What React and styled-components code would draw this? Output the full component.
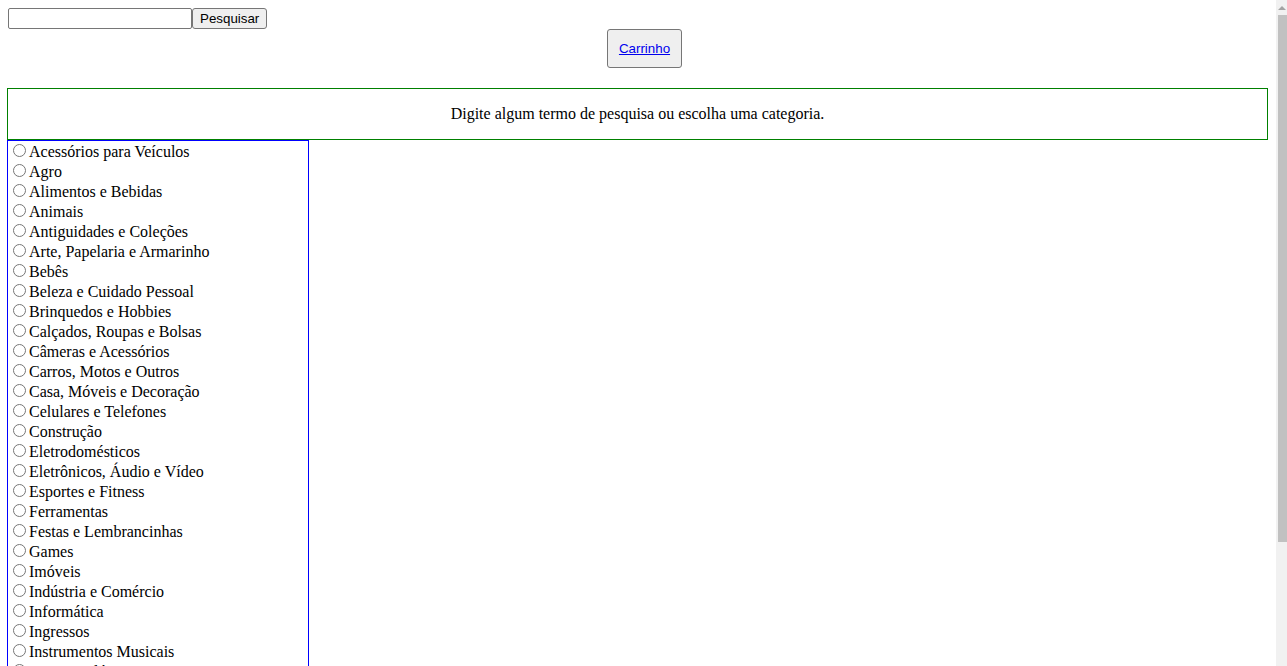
import React from 'react';
import styled, { createGlobalStyle } from 'styled-components';

const categories = [
  'Acessórios para Veículos',
  'Agro',
  'Alimentos e Bebidas',
  'Animais',
  'Antiguidades e Coleções',
  'Arte, Papelaria e Armarinho',
  'Bebês',
  'Beleza e Cuidado Pessoal',
  'Brinquedos e Hobbies',
  'Calçados, Roupas e Bolsas',
  'Câmeras e Acessórios',
  'Carros, Motos e Outros',
  'Casa, Móveis e Decoração',
  'Celulares e Telefones',
  'Construção',
  'Eletrodomésticos',
  'Eletrônicos, Áudio e Vídeo',
  'Esportes e Fitness',
  'Ferramentas',
  'Festas e Lembrancinhas',
  'Games',
  'Imóveis',
  'Indústria e Comércio',
  'Informática',
  'Ingressos',
  'Instrumentos Musicais',
  'Joias e Relógios',
  'Livros, Revistas e Comics',
  'Música, Filmes e Seriados',
  'Saúde',
  'Serviços',
  'Mais Categorias',
];

const App = () => {
  return (
    <>
      <GlobalStyle />
      <Header>
        <SearchForm onSubmit={(e) => e.preventDefault()}>
          <SearchInput type='text' />
          <SearchButton type='submit'>Pesquisar</SearchButton>
        </SearchForm>
        <CartButton>
          <a href='#carrinho'>Carrinho</a>
        </CartButton>
      </Header>
      <Message>
        <p>Digite algum termo de pesquisa ou escolha uma categoria.</p>
      </Message>
      <CategoryList>
        {categories.map((name) => (
          <Category key={name}>
            <input type='radio' name='category' value={name} />
            {name}
          </Category>
        ))}
      </CategoryList>
      <ScrollTrack>
        <ScrollArrow />
        <ScrollThumb />
      </ScrollTrack>
    </>
  );
};

export default App;

const GlobalStyle = createGlobalStyle`
  body {
    margin: 8px 19px 8px 7px;
    font-family: "Liberation Serif", "Times New Roman", serif;
    font-size: 16px;
    color: #000;
    background: #fff;
  }
`;

const Header = styled.header`
  display: flex;
  flex-direction: column;
  margin-bottom: 20px;
`;

const SearchForm = styled.form`
  display: flex;
  margin-left: 1px;
`;

const SearchInput = styled.input`
  width: 184px;
  height: 21px;
  box-sizing: border-box;
  padding: 1px 2px;
  border: 1px solid #767676;
  border-radius: 2px;
  font-family: "Liberation Sans", Arial, sans-serif;
  font-size: 13.33px;
`;

const SearchButton = styled.button`
  height: 21px;
  box-sizing: border-box;
  padding: 1px 7px;
  border: 1px solid #767676;
  border-radius: 3px;
  background: #efefef;
  font-family: "Liberation Sans", Arial, sans-serif;
  font-size: 13.33px;
  color: #000;
`;

const CartButton = styled.button`
  align-self: center;
  margin-left: 14px;
  height: 39px;
  box-sizing: border-box;
  padding: 0 10.5px;
  border: 1px solid #767676;
  border-radius: 3px;
  background: #efefef;
  font-family: "Liberation Sans", Arial, sans-serif;
  font-size: 13.33px;

  a {
    color: #0000ee;
    text-decoration: underline;
  }
`;

const Message = styled.div`
  border: 1px solid green;
  text-align: center;

  p {
    margin: 16px 0;
    line-height: 18px;
  }
`;

const CategoryList = styled.div`
  width: 300px;
  border: 1px solid blue;
`;

const Category = styled.label`
  display: block;
  height: 20px;
  line-height: 20px;

  input {
    margin: 3px 3px 0 5px;
  }
`;

const ScrollTrack = styled.div`
  position: fixed;
  top: 0;
  right: 0;
  bottom: 0;
  width: 11px;
  background: #f1f1f1;
  display: flex;
  flex-direction: column;
  align-items: flex-end;
`;

const ScrollArrow = styled.div`
  width: 0;
  height: 0;
  margin: 6px 1px 5px 0;
  border-left: 4px solid transparent;
  border-right: 4px solid transparent;
  border-bottom: 4px solid #a3a3a3;
`;

const ScrollThumb = styled.div`
  width: 9px;
  height: 527px;
  background: #c1c1c1;
`;
